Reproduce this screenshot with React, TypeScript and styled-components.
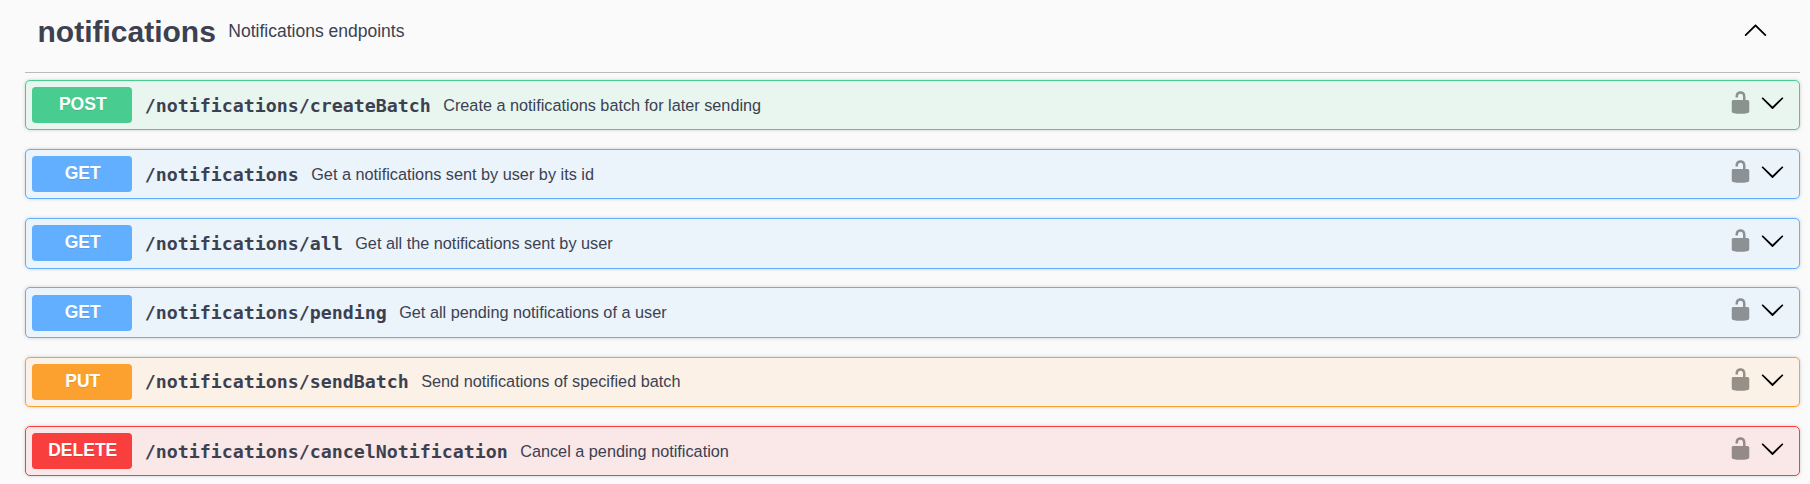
import React from "react";
import styled, { createGlobalStyle } from "styled-components";

const GlobalStyle = createGlobalStyle`
  * { box-sizing: border-box; }
  body {
    margin: 0;
    background: #fafafa;
    color: #3b4151;
    font-family: "Liberation Sans", Arial, sans-serif;
    overflow: hidden;
  }
`;

type Method = "POST" | "GET" | "PUT" | "DELETE";

const methodColors: Record<Method, { solid: string; tint: string }> = {
  POST: { solid: "#49cc90", tint: "#e8f6ef" },
  GET: { solid: "#61affe", tint: "#ebf3fb" },
  PUT: { solid: "#fca130", tint: "#fbf1e6" },
  DELETE: { solid: "#f93e3e", tint: "#fae7e7" },
};

const Section = styled.section`
  height: 484px;
  padding: 0 10px 0 25px;
`;

const Header = styled.header`
  display: flex;
  align-items: center;
  height: 73px;
  padding: 0 31.8px 11px 12.5px;
  border-bottom: 1px solid #bababc;

  > svg {
    margin-bottom: 2px;
  }
`;

const Title = styled.h3`
  margin: 0;
  padding-top: 2px;
  font-size: 30px;
  line-height: 36px;
  font-weight: 700;
`;

const Subtitle = styled.small`
  flex: 1;
  padding-left: 12.5px;
  font-size: 17.5px;
  line-height: 22px;
`;

const Operations = styled.div`
  display: flex;
  flex-direction: column;
  gap: 18.8px;
  padding-top: 6.8px;
`;

const Operation = styled.div<{ $method: Method }>`
  display: flex;
  align-items: center;
  height: 50.4px;
  padding: 6.25px;
  border: 1px solid ${(p) => methodColors[p.$method].solid};
  border-radius: 5px;
  background: ${(p) => methodColors[p.$method].tint};
  box-shadow: 0 0 3.75px rgba(0, 0, 0, 0.19);
`;

const MethodBadge = styled.span<{ $method: Method }>`
  flex: none;
  width: 100px;
  height: 35.9px;
  padding-left: 1px;
  border-radius: 3.75px;
  background: ${(p) => methodColors[p.$method].solid};
  color: #fff;
  font-size: 17.5px;
  font-weight: 700;
  line-height: 35.7px;
  text-align: center;
  text-shadow: 0 1px 0 rgba(0, 0, 0, 0.1);
`;

const Path = styled.span`
  padding: 1.3px 12.5px 0;
  font-family: "DejaVu Sans Mono", monospace;
  font-size: 18.27px;
  font-weight: 700;
  line-height: 22px;
`;

const Summary = styled.span`
  flex: 1;
  padding-bottom: 0.8px;
  font-size: 16.25px;
  line-height: 20px;
`;

const Actions = styled.div`
  display: flex;
  gap: 7.5px;
  padding: 0 7.75px 5.2px 0;
`;

const Icon = styled.svg<{ $faded?: boolean }>`
  display: block;
  width: 25px;
  height: 25px;
  fill: #000;
  opacity: ${(p) => (p.$faded ? 0.4 : 1)};
`;

const UnlockedIcon = () => (
  <Icon viewBox="0 0 20 20" $faded>
    <path d="M15.8 8H14V5.6C14 2.703 12.665 1 10 1 7.334 1 6 2.703 6 5.6V6h2v-.801C8 3.754 8.797 3 10 3c1.203 0 2 .754 2 2.199V8H4c-.553 0-1 .646-1 1.199V17c0 .549.428 1.139.951 1.307l1.197.387C5.672 18.861 6.55 19 7.1 19h5.8c.549 0 1.428-.139 1.951-.307l1.196-.387c.524-.167.953-.757.953-1.306V9.199C17 8.646 16.352 8 15.8 8z" />
  </Icon>
);

const ArrowDown = () => (
  <Icon viewBox="0 0 20 20">
    <path d="M17.418 6.109c.272-.268.709-.268.979 0s.271.701 0 .969l-7.908 7.83c-.27.268-.707.268-.979 0l-7.908-7.83c-.27-.268-.27-.701 0-.969.271-.268.709-.268.979 0L10 13.25l7.418-7.141z" />
  </Icon>
);

const ArrowUp = () => (
  <Icon viewBox="0 0 20 20">
    <path d="M17.418 14.908c.272.268.709.268.979 0s.271-.701 0-.969l-7.908-7.83c-.27-.268-.707-.268-.979 0l-7.908 7.83c-.27.268-.27.701 0 .969.271.268.709.268.979 0L10 7.767l7.418 7.141z" />
  </Icon>
);

const operations: { method: Method; path: string; summary: string }[] = [
  { method: "POST", path: "/notifications/createBatch", summary: "Create a notifications batch for later sending" },
  { method: "GET", path: "/notifications", summary: "Get a notifications sent by user by its id" },
  { method: "GET", path: "/notifications/all", summary: "Get all the notifications sent by user" },
  { method: "GET", path: "/notifications/pending", summary: "Get all pending notifications of a user" },
  { method: "PUT", path: "/notifications/sendBatch", summary: "Send notifications of specified batch" },
  { method: "DELETE", path: "/notifications/cancelNotification", summary: "Cancel a pending notification" },
];

export default function App() {
  return (
    <>
      <GlobalStyle />
      <Section>
        <Header>
          <Title>notifications</Title>
          <Subtitle>Notifications endpoints</Subtitle>
          <ArrowUp />
        </Header>
        <Operations>
          {operations.map((op) => (
            <Operation key={op.path} $method={op.method}>
              <MethodBadge $method={op.method}>{op.method}</MethodBadge>
              <Path>{op.path}</Path>
              <Summary>{op.summary}</Summary>
              <Actions>
                <UnlockedIcon />
                <ArrowDown />
              </Actions>
            </Operation>
          ))}
        </Operations>
      </Section>
    </>
  );
}
